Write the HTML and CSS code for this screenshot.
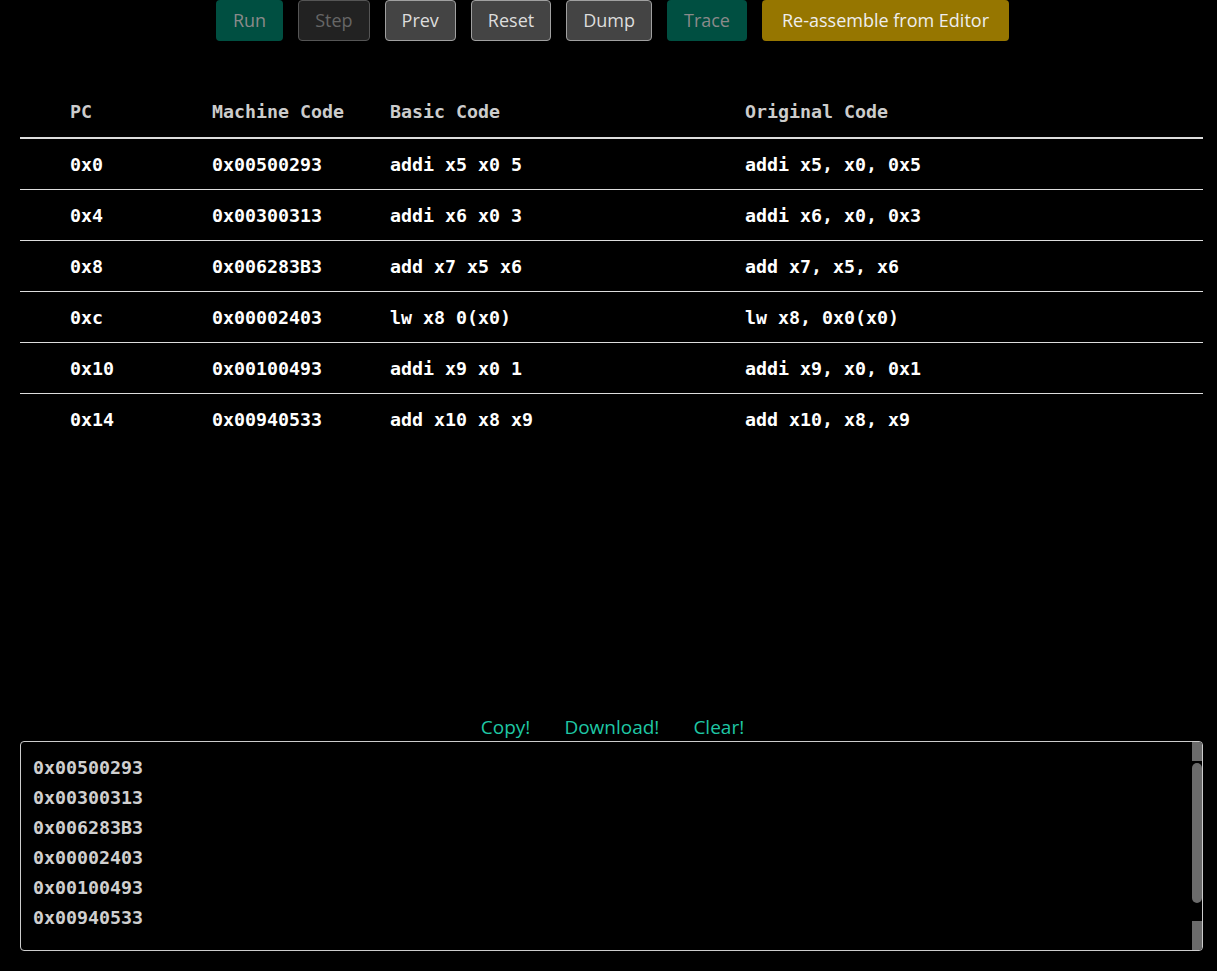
FILE: index.html
```html
<!DOCTYPE html>
<html>
<head>
<meta charset="utf-8">
<link rel="stylesheet" href="styles.css">
</head>
<body>
<div class="toolbar">
  <button class="btn btn-teal">Run</button>
  <button class="btn btn-disabled">Step</button>
  <button class="btn btn-gray">Prev</button>
  <button class="btn btn-gray">Reset</button>
  <button class="btn btn-gray">Dump</button>
  <button class="btn btn-teal">Trace</button>
  <button class="btn btn-gold">Re-assemble from Editor</button>
</div>
<table class="code-table">
  <colgroup>
    <col class="c1"><col class="c2"><col class="c3"><col class="c4">
  </colgroup>
  <thead>
    <tr><th>PC</th><th>Machine Code</th><th>Basic Code</th><th>Original Code</th></tr>
  </thead>
  <tbody>
    <tr><td>0x0</td><td>0x00500293</td><td>addi x5 x0 5</td><td>addi x5, x0, 0x5</td></tr>
    <tr><td>0x4</td><td>0x00300313</td><td>addi x6 x0 3</td><td>addi x6, x0, 0x3</td></tr>
    <tr><td>0x8</td><td>0x006283B3</td><td>add x7 x5 x6</td><td>add x7, x5, x6</td></tr>
    <tr><td>0xc</td><td>0x00002403</td><td>lw x8 0(x0)</td><td>lw x8, 0x0(x0)</td></tr>
    <tr><td>0x10</td><td>0x00100493</td><td>addi x9 x0 1</td><td>addi x9, x0, 0x1</td></tr>
    <tr><td>0x14</td><td>0x00940533</td><td>add x10 x8 x9</td><td>add x10, x8, x9</td></tr>
  </tbody>
</table>
<div class="links">
  <a class="link">Copy!</a>
  <a class="link">Download!</a>
  <a class="link">Clear!</a>
</div>
<div class="dump-wrap">
<textarea class="dump" readonly>0x00500293
0x00300313
0x006283B3
0x00002403
0x00100493
0x00940533
</textarea>
<div class="scrollbar">
  <div class="sb-btn sb-up"></div>
  <div class="sb-thumb"></div>
  <div class="sb-btn sb-down"></div>
</div>
</div>
</body>
</html>
```
FILE: styles.css
```css
html, body {
  margin: 0;
  padding: 0;
  background: #000;
}
body {
  font-family: "Open Sans", "Noto Sans", sans-serif;
  color: #fff;
}
.toolbar {
  display: flex;
  justify-content: center;
  gap: 15px;
  padding-left: 8px;
}
.btn {
  height: 41px;
  padding: 0 16px 2px;
  font-family: "Open Sans", "Noto Sans", sans-serif;
  font-size: 18px;
  border-radius: 4px;
  border: 1px solid transparent;
  line-height: 1;
}
.btn-teal {
  background: #004f41;
  color: #8a8a8a;
}
.btn-disabled {
  background: #222;
  border-color: #555;
  color: #666;
}
.btn-gray {
  background: #444;
  border-color: #a0a0a0;
  color: #ddd;
}
.btn-gold {
  background: #967600;
  color: #eee;
  padding: 0 19px 2px;
}
.code-table {
  margin: 45px 14px 0 20px;
  width: calc(100% - 34px);
  border-collapse: collapse;
  table-layout: fixed;
  font-family: "DejaVu Sans Mono", monospace;
  font-weight: bold;
  font-size: 18.3px;
}
.c1 { width: 192px; }
.c2 { width: 178px; }
.c3 { width: 355px; }
.code-table th {
  text-align: left;
  color: #ccc;
  height: 51px;
  padding: 0;
  border-bottom: 2px solid #ddd;
  vertical-align: middle;
}
.code-table td {
  height: 50px;
  padding: 0;
  color: #fff;
  border-bottom: 1px solid #ddd;
  vertical-align: middle;
}
.code-table tbody tr:last-child td {
  border-bottom: none;
}
.code-table th:first-child,
.code-table td:first-child {
  padding-left: 50px;
}
.links {
  margin-top: 269px;
  display: flex;
  justify-content: center;
  gap: 34px;
  height: 28px;
  align-items: center;
  padding-left: 8px;
}
.link {
  color: #1fc7a5;
  font-size: 19px;
  cursor: pointer;
}
.dump-wrap {
  position: relative;
  margin: 0 14px 0 20px;
  height: 210px;
}
.dump {
  display: block;
  box-sizing: border-box;
  width: 100%;
  height: 210px;
  margin: 0;
  background: #000;
  color: #d0d0d0;
  border: 1px solid #ccc;
  border-radius: 4px;
  padding: 11px 12px 16px 12px;
  font-family: "DejaVu Sans Mono", monospace;
  font-weight: bold;
  font-size: 18.3px;
  line-height: 30px;
  resize: none;
  overflow: hidden;
  outline: none;
}
.scrollbar {
  position: absolute;
  top: 1px;
  right: 1px;
  bottom: 1px;
  width: 10px;
  display: flex;
  flex-direction: column;
}
.sb-btn {
  background: #6b6b6b;
}
.sb-up {
  height: 19px;
  border-top-right-radius: 3px;
}
.sb-thumb {
  margin-top: 2px;
  height: 140px;
  background: #6b6b6b;
  border-radius: 5px;
}
.sb-down {
  margin-top: auto;
  height: 29px;
  border-bottom-right-radius: 3px;
}
```
